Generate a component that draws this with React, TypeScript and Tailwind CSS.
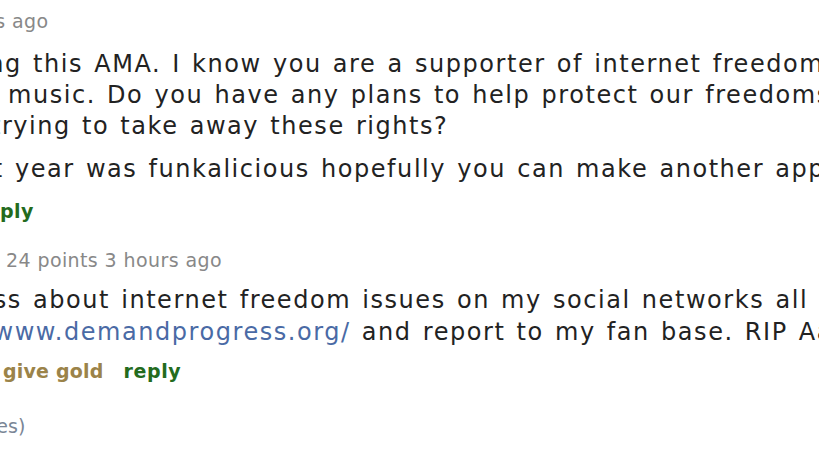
import React from 'react';

// A line whose hidden lead-in text spills off the left edge; the visible text starts at the line's padding.
const Line: React.FC<{ lead?: React.ReactNode; className?: string; children: React.ReactNode }> = ({ lead, className, children }) => (
    <div className={`flex whitespace-pre ${className ?? ''}`}>
        <span className="flex w-0 shrink-0 justify-end">{lead}</span>
        {children}
    </div>
);

export default function App() {
    return (
        <div className="h-[452px] w-[819px] overflow-hidden bg-white pt-[9px] font-['DejaVu_Sans',Verdana,sans-serif] text-[#222]">
            {/* first comment */}
            <Line lead="Funkmaster 412 points 3 hours " className="pl-[12px] text-[19px] leading-[24px] tracking-[0.4px] text-[#888]">
                ago
            </Line>

            <div className="mt-[16px] text-[24px] leading-[31px] tracking-[1.55px] [word-spacing:2px]">
                <Line lead="Thanks for doing " className="pl-[33px]">
                    this AMA. I know you are a supporter of internet freedom and
                </Line>
                <Line lead="and " className="pl-[8px]">
                    music. Do you have any plans to help protect our freedoms from those who are
                </Line>
                <Line lead="those who are trying " className="pl-[82px]">
                    to take away these rights?
                </Line>
                <Line lead="Your show last " className="mt-[12px] pl-[15px]">
                    year was funkalicious hopefully you can make another appearance!
                </Line>
            </div>

            <Line lead="permalink  save  report  re" className="mt-[14px] text-[19px] font-bold leading-[24px] tracking-[0.4px] text-[#236b1d]">
                ply
            </Line>

            {/* reply */}
            <Line lead="BootsyCollins " className="mt-[25px] pl-[6px] text-[19px] leading-[24px] tracking-[0.4px] text-[#888]">
                24 points 3 hours ago
            </Line>

            <div className="mt-[12px] text-[24px] leading-[32px] tracking-[1.55px] [word-spacing:2px]">
                <Line lead="I spread awareness " className="pl-[33px]">
                    about internet freedom issues on my social networks all the time
                </Line>
                <Line lead={<span className="text-[#4a6aa5]">http://www.</span>} className="pl-[64px]">
                    <span className="text-[#4a6aa5]">demandprogress.org/</span> and report to my fan base. RIP Aaron
                </Line>
            </div>

            <Line lead="permalink  save  report  " className="mt-[11px] pl-[3px] text-[19px] font-bold leading-[24px] tracking-[0.2px]">
                <span className="text-[#9b8349]">give gold</span>
                <span className="ml-[20px] tracking-[0.6px] text-[#236b1d]">reply</span>
            </Line>

            <Line lead="load more comments (3 replie" className="mt-[31px] pl-[8px] text-[19px] leading-[24px] text-[#7a8696]">
                s)
            </Line>
        </div>
    );
}
